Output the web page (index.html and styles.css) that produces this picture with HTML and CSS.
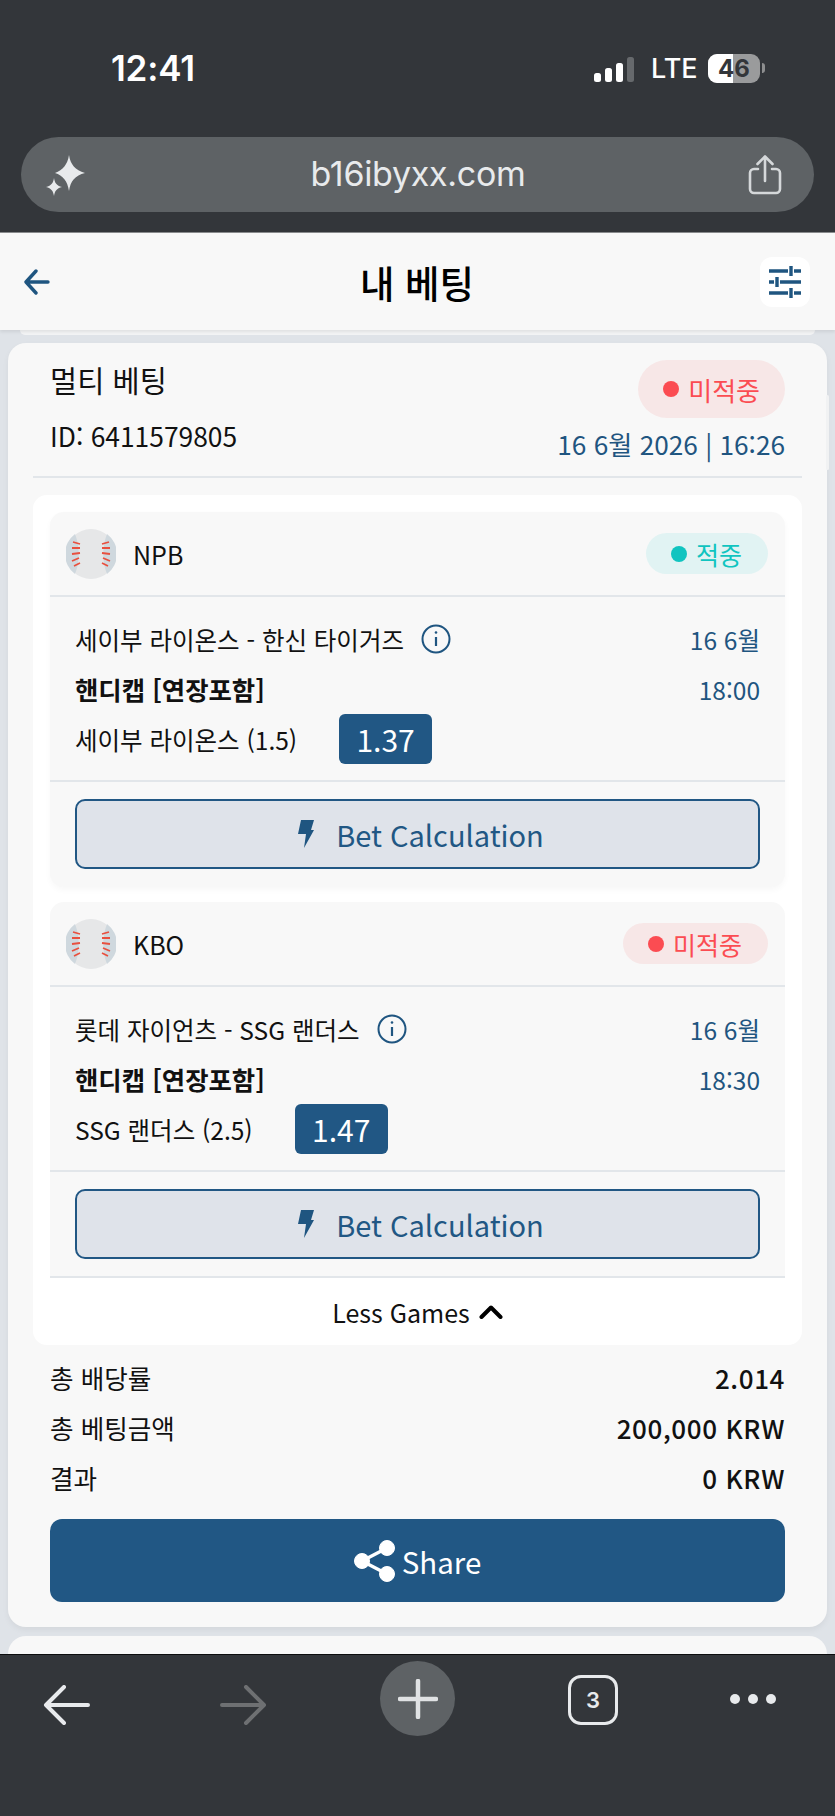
FILE: index.html
```html
<!DOCTYPE html>
<html lang="ko">
<head>
<meta charset="utf-8">
<title>내 베팅</title>
<link rel="stylesheet" href="styles.css">
</head>
<body>
<div class="screen">
  <div class="chrome-top">
    <div class="status">
      <span class="time">12:41</span>
      <div class="status-right">
        <svg class="signal" width="40" height="25" viewBox="0 0 40 25"><rect x="0" y="16" width="7" height="9" rx="2.5" fill="#fff"/><rect x="11" y="11" width="7" height="14" rx="2.5" fill="#fff"/><rect x="22" y="6" width="7" height="19" rx="2.5" fill="#fff"/><rect x="33" y="0" width="7" height="25" rx="2.5" fill="#66696c"/></svg>
        <span class="lte">LTE</span>
        <div class="battery"><span class="battery-fill"></span><span class="battery-num">46</span></div>
        <span class="battery-cap"></span>
      </div>
    </div>
    <div class="urlbar">
      <svg width="42" height="42" viewBox="0 0 42 42"><path d="M23 1c1.500 9.500 6 15 16 18-10 2.500-14.500 8-16 18-1.500-10-6-15.500-14-18 8-3 12.500-8.500 14-18z" fill="#e8eaec"/><path d="M8 24c.8 5 2.500 7.500 8 9-5.500 1.500-7.200 4-8 9-.8-5-2.500-7.500-8-9 5.500-1.500 7.200-4 8-9z" fill="#e8eaec"/></svg>
      <span class="url">b16ibyxx.com</span>
      <svg width="34" height="40" viewBox="0 0 34 40" fill="none" stroke="#d5d8da" stroke-width="2.6" stroke-linecap="round" stroke-linejoin="round"><path d="M17 26V2M9.500 9 17 1.500 24.500 9"/><path d="M10 14H6a4 4 0 0 0-4 4v16a4 4 0 0 0 4 4h22a4 4 0 0 0 4-4V18a4 4 0 0 0-4-4h-4"/></svg>
    </div>
  </div>

  <header class="app-header">
    <svg class="back" width="26" height="26" viewBox="0 0 26 26" fill="none" stroke="#1f5580" stroke-width="3.400" stroke-linecap="round" stroke-linejoin="round"><path d="M24 13H3M12 2 2 13l10 11"/></svg>
    <h1 class="page-title">내 베팅</h1>
    <div class="filter-btn">
      <svg width="34" height="32" viewBox="0 0 34 32" fill="none" stroke="#1f5580" stroke-width="3.400"><path d="M1 5h19M26 5h7M23 0v10M1 16h5M12 16h21M9 11v10M1 27h19M26 27h7M23 22v10"/></svg>
    </div>
  </header>

  <main class="content">
    <div class="scroll-thumb"></div>
    <div class="prev-sliver"></div>
    <section class="bet-card">
      <div class="bet-top">
        <div class="bet-top-left">
          <div class="bet-type">멀티 베팅</div>
          <div class="bet-id">ID: 6411579805</div>
        </div>
        <div class="bet-top-right">
          <span class="badge badge-lost badge-big"><i class="dot"></i>미적중</span>
          <div class="bet-date">16 6월 2026 | 16:26</div>
        </div>
      </div>

      <div class="games">
        <article class="game">
          <div class="game-head">
            <svg class="ball" width="50" height="50" viewBox="0 0 50 50"><use href="#ball"/></svg>
            <span class="league">NPB</span>
            <span class="badge badge-won"><i class="dot"></i>적중</span>
          </div>
          <div class="game-body">
            <div class="row"><div class="match">세이부 라이온스 - 한신 타이거즈<svg class="info" width="30" height="30" viewBox="0 0 30 30"><use href="#info"/></svg></div><span class="game-date">16 6월</span></div>
            <div class="row row-market"><strong class="market">핸디캡 [연장포함]</strong><span class="game-date">18:00</span></div>
            <div class="pick"><span>세이부 라이온스 (1.5)</span><span class="odds">1.37</span></div>
          </div>
          <div class="game-foot">
            <button class="calc"><svg width="16" height="28" viewBox="0 0 16 28"><use href="#bolt"/></svg>Bet Calculation</button>
          </div>
        </article>

        <article class="game game-last">
          <div class="game-head">
            <svg class="ball" width="50" height="50" viewBox="0 0 50 50"><use href="#ball"/></svg>
            <span class="league">KBO</span>
            <span class="badge badge-lost"><i class="dot"></i>미적중</span>
          </div>
          <div class="game-body">
            <div class="row"><div class="match">롯데 자이언츠 - SSG 랜더스<svg class="info" width="30" height="30" viewBox="0 0 30 30"><use href="#info"/></svg></div><span class="game-date">16 6월</span></div>
            <div class="row row-market"><strong class="market">핸디캡 [연장포함]</strong><span class="game-date">18:30</span></div>
            <div class="pick"><span>SSG 랜더스 (2.5)</span><span class="odds">1.47</span></div>
          </div>
          <div class="game-foot">
            <button class="calc"><svg width="16" height="28" viewBox="0 0 16 28"><use href="#bolt"/></svg>Bet Calculation</button>
          </div>
        </article>

        <div class="less">Less Games<svg width="24" height="14" viewBox="0 0 24 14" fill="none" stroke="#000" stroke-width="4" stroke-linecap="round" stroke-linejoin="round"><path d="M2.500 12 12 2.500l9.500 9.500"/></svg></div>
      </div>

      <dl class="totals">
        <div class="total"><dt>총 배당률</dt><dd>2.014</dd></div>
        <div class="total"><dt>총 베팅금액</dt><dd>200,000 KRW</dd></div>
        <div class="total"><dt>결과</dt><dd>0 KRW</dd></div>
      </dl>

      <button class="share"><svg width="42" height="42" viewBox="0 0 42 42" fill="#fff" stroke="#fff"><circle cx="33" cy="8" r="7.500"/><circle cx="8" cy="21" r="7.500"/><circle cx="33" cy="34" r="7.500"/><path d="M33 8 8 21l25 13" fill="none" stroke-width="3.400"/></svg>Share</button>
    </section>
    <div class="next-card"></div>
  </main>

  <nav class="chrome-bottom">
    <svg width="48" height="40" viewBox="0 0 48 40" fill="none" stroke="#e8eaec" stroke-width="4" stroke-linecap="round" stroke-linejoin="round"><path d="M45 20H4M21 2 3 20l18 18"/></svg>
    <svg class="forward" width="48" height="40" viewBox="0 0 48 40" fill="none" stroke="#6e7072" stroke-width="4" stroke-linecap="round" stroke-linejoin="round"><path d="M3 20h41M27 2l18 18-18 18"/></svg>
    <div class="plus"><svg width="40" height="40" viewBox="0 0 40 40" fill="none" stroke="#e0e2e4" stroke-width="4.500" stroke-linecap="round"><path d="M20 2v36M2 20h36"/></svg></div>
    <div class="tabs">3</div>
    <div class="dots"><i></i><i></i><i></i></div>
  </nav>
</div>

<svg class="defs" width="0" height="0">
  <defs>
    <g id="ball">
      <circle cx="25" cy="25" r="25" fill="#e6e7e8"/>
      <path d="M9 5A25 25 0 0 0 9 45C14 33 14 17 9 5zM41 5A25 25 0 0 1 41 45C36 33 36 17 41 5z" fill="#cfd8de"/>
      <path d="M7 14l7 2M6 20h8M6 26l8-1M6 33l7-3M8 38l6-3M43 14l-7 2M44 20h-8M44 26l-8-1M44 33l-7-3M42 38l-6-3" stroke="#e8503f" stroke-width="1.800" fill="none" transform="translate(0 -1)"/>
    </g>
    <g id="info" fill="none" stroke="#1f5580">
      <circle cx="15" cy="15" r="13.500" stroke-width="2"/>
      <path d="M15 13v9" stroke-width="2.200"/>
      <circle cx="15" cy="8.500" r="1.300" fill="#1f5580" stroke="none"/>
    </g>
    <path id="bolt" d="M3 0h13l-3 10h3L6 28l2-14H0z" fill="#1f5580"/>
  </defs>
</svg>
</body>
</html>
```
FILE: styles.css
```css
* { box-sizing: border-box; }
html, body { margin: 0; padding: 0; }
body {
  width: 835px;
  height: 1816px;
  overflow: hidden;
  font-family: "Noto Sans CJK KR", "Noto Sans", sans-serif;
  color: #111;
}
.screen { width: 835px; height: 1816px; display: flex; flex-direction: column; background: #dfe3e8; overflow: hidden; }
.defs { position: absolute; }

.chrome-top { height: 233px; flex: none; background: #33363a; border-bottom: 1px solid #8a8c8e; padding: 0 21px; }
.status { height: 137px; padding: 46px 49px 0 90px; display: flex; justify-content: space-between; align-items: flex-start; color: #fff; font-family: Inter, sans-serif; }
.time { font-size: 35px; line-height: 44px; font-weight: 600; letter-spacing: -0.2px; }
.status-right { display: flex; align-items: center; height: 44px; position: relative; }
.signal { flex: none; margin-top: 2px; }
.lte { margin-left: 17px; font-size: 27px; font-weight: 500; width: 57px; }
.battery { position: relative; width: 52px; height: 29px; border-radius: 9px; background: #9a9b9c; overflow: hidden; text-align: center; flex: none; }
.battery-fill { position: absolute; left: 0; top: 0; bottom: 0; width: 25px; background: #fff; }
.battery-num { position: relative; color: #33363a; font-size: 24px; font-weight: 700; line-height: 29px; display: block; }
.battery-cap { width: 3px; height: 10px; background: #8d8e8f; border-radius: 0 3px 3px 0; margin-left: 2px; flex: none; }
.urlbar { height: 75px; border-radius: 38px; background: #5e6265; display: flex; align-items: center; justify-content: space-between; padding: 0 32px 0 25px; }
.url { color: #e8eaec; font-family: Inter, sans-serif; font-size: 34px; letter-spacing: -0.3px; margin-top: -2px; }

.app-header { height: 97px; flex: none; background: #f8f8f8; display: grid; grid-template-columns: 1fr auto 1fr; align-items: center; padding: 0 25px 0 24px; box-shadow: 0 2px 3px rgba(0,0,0,.08); position: relative; z-index: 1; }
.page-title { margin: 0; font-size: 37.500px; font-weight: 500; color: #000; line-height: 1; }
.filter-btn { justify-self: end; width: 50px; height: 50px; border-radius: 12px; background: #fff; display: flex; align-items: center; justify-content: center; }

.content { flex: 1; min-height: 0; overflow: hidden; padding: 0 8px; position: relative; }
.scroll-thumb { position: absolute; right: 6px; top: 65px; width: 3px; height: 75px; border-radius: 2px; background: #f1f2f3; }
.prev-sliver { height: 5px; margin: 0 12px 8px; background: #f3f4f5; border-radius: 0 0 8px 8px; }
.bet-card { height: 1284px; background: #f8f8f8; border-radius: 18px; padding: 17px 25px 0; box-shadow: 0 3px 6px rgba(0,0,0,.05); }
.bet-top { height: 118px; padding: 0 17px; display: flex; justify-content: space-between; border-bottom: 2px solid #e2e6ea; }
.bet-type { font-size: 29.500px; line-height: 40px; margin-top: -1px; }
.bet-id { font-size: 26.400px; line-height: 36px; margin-top: 19px; }
.bet-top-right { display: flex; flex-direction: column; align-items: flex-end; }
.bet-date { color: #1f5580; font-size: 26.200px; line-height: 36px; margin-top: 8px; }

.badge { display: inline-flex; align-items: center; gap: 9px; border-radius: 24px; font-size: 25px; }
.badge .dot { width: 16px; height: 16px; border-radius: 50%; background: currentColor; flex: none; }
.badge-big { height: 58px; padding: 0 25px; border-radius: 29px; font-size: 26px; background: #f7e7e7; color: #fb4c52; }
.badge-lost { color: #fb4c52; background: #f7e7e7; }
.badge-won { color: #10c4c0; background: #e1f3f3; }
.game-head .badge { height: 41px; padding: 0 26px 0 25px; }

.games { margin: 17px 0 0; background: #fff; border-radius: 14px; padding: 17px 17px 0; height: 850px; }
.game { height: 375px; background: #f8f8f8; border-radius: 14px; margin-bottom: 15px; box-shadow: 0 3px 6px rgba(0,0,0,.03); }
.game-last { height: 376px; margin-bottom: 0; border-radius: 14px 14px 0 0; box-shadow: none; border-bottom: 2px solid #e2e6ea; }
.game-head { height: 85px; padding: 0 17px 0 16px; display: flex; align-items: center; border-bottom: 2px solid #e2e6ea; }
.ball { flex: none; }
.league { margin-left: 17px; font-size: 25px; flex: 1; }
.game-body { height: 185px; padding: 17px 25px 0; border-bottom: 2px solid #e2e6ea; }
.row { display: flex; justify-content: space-between; align-items: center; height: 50px; }
.match { display: flex; align-items: center; font-size: 24.500px; }
.info { margin-left: 17px; }
.game-date { color: #1f5580; font-size: 24.500px; }
.market { font-size: 25.400px; font-weight: 700; }
.pick { display: flex; align-items: center; font-size: 24.500px; height: 50px; gap: 42px; }
.odds { width: 93px; height: 50px; border-radius: 6px; background: #215784; color: #fff; font-size: 30px; display: flex; align-items: center; justify-content: center; }
.game-foot { padding: 17px 25px 0; }
.calc { width: 100%; height: 70px; padding: 0 0 0 7px; border: 2px solid #215784; border-radius: 10px; background: #dfe3ea; color: #215784; font: inherit; font-size: 29px; display: flex; align-items: center; justify-content: center; gap: 22px; }
.less { height: 67px; display: flex; align-items: center; justify-content: center; gap: 9px; font-size: 25px; }

.totals { margin: 7px 17px 0; padding: 0; }
.total { display: flex; justify-content: space-between; align-items: center; height: 50px; font-size: 25.600px; }
.total dt { margin: 0; }
.total dd { margin: 0; font-weight: 500; font-size: 26px; letter-spacing: .6px; }
.share { display: flex; align-items: center; justify-content: center; gap: 6px; width: 735px; height: 83px; margin: 17px 0 0 17px; border: none; border-radius: 12px; background: #215784; color: #fff; font: inherit; font-size: 29.500px; }
.next-card { height: 40px; margin-top: 9px; background: #f8f8f8; border-radius: 18px 18px 0 0; }

.chrome-bottom { height: 162px; flex: none; background: #33363a; border-top: 1px solid #0c0d0e; display: flex; gap: 113px; align-items: flex-start; padding: 6px 0 0 43px; }
.chrome-bottom > svg { margin-top: 24px; }
.chrome-bottom > .forward { margin-left: 15px; }
.plus { width: 75px; height: 75px; border-radius: 50%; background: #5e6265; display: flex; align-items: center; justify-content: center; }
.tabs { width: 50px; height: 50px; margin-top: 14px; border: 3px solid #e8eaec; border-radius: 13px; color: #e8eaec; font-family: Inter, sans-serif; font-size: 22px; font-weight: 600; display: flex; align-items: center; justify-content: center; }
.dots { display: flex; gap: 8px; margin: 33px 0 0 -1px; }
.dots i { width: 10px; height: 10px; border-radius: 50%; background: #e8eaec; }
```
